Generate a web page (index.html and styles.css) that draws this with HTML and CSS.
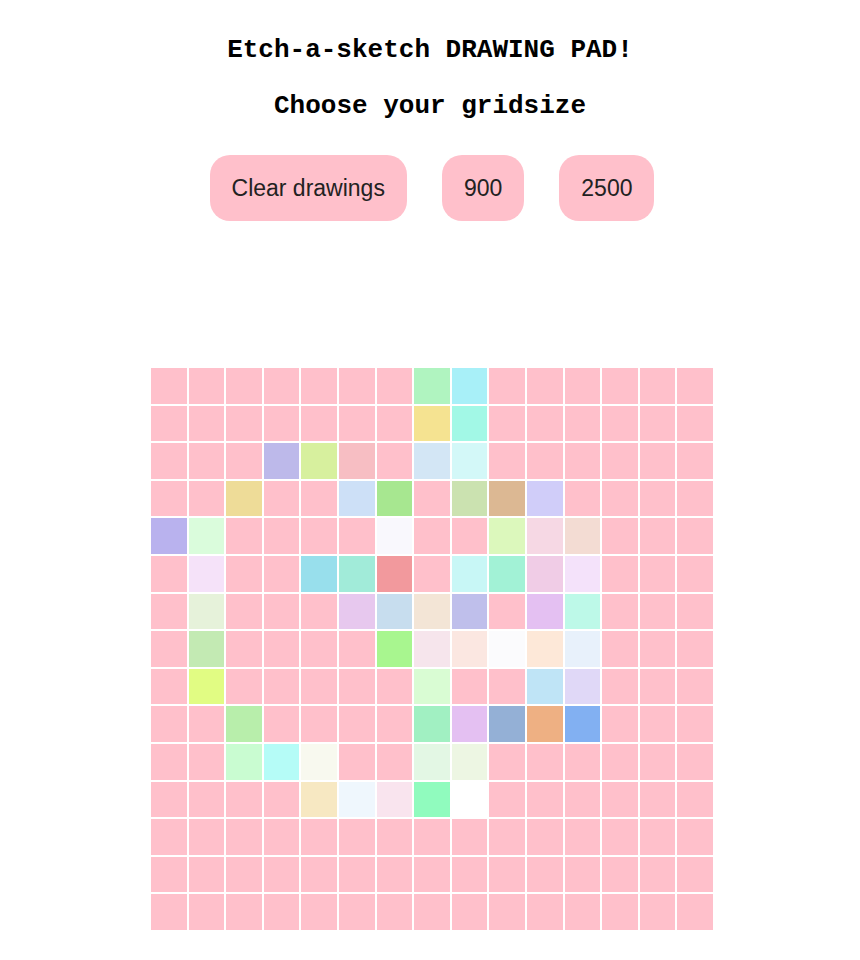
FILE: index.html
```html
<!DOCTYPE html>
<html lang="en">
<head>
<meta charset="utf-8">
<title>Etch-a-sketch</title>
<link rel="stylesheet" href="styles.css">
</head>
<body>
<main class="page">
  <h1 class="title">Etch-a-sketch DRAWING PAD!</h1>
  <h2 class="subtitle">Choose your gridsize</h2>
  <div class="controls">
    <button class="btn">Clear drawings</button>
    <button class="btn">900</button>
    <button class="btn">2500</button>
  </div>
  <div class="grid">
    <!-- row 0 -->
    <div class="cell"></div><div class="cell"></div><div class="cell"></div><div class="cell"></div><div class="cell"></div><div class="cell"></div><div class="cell"></div><div class="cell" style="background:#b0f4c0"></div><div class="cell" style="background:#a8f0f8"></div><div class="cell"></div><div class="cell"></div><div class="cell"></div><div class="cell"></div><div class="cell"></div><div class="cell"></div>
    <!-- row 1 -->
    <div class="cell"></div><div class="cell"></div><div class="cell"></div><div class="cell"></div><div class="cell"></div><div class="cell"></div><div class="cell"></div><div class="cell" style="background:#f5e391"></div><div class="cell" style="background:#a2f8e6"></div><div class="cell"></div><div class="cell"></div><div class="cell"></div><div class="cell"></div><div class="cell"></div><div class="cell"></div>
    <!-- row 2 -->
    <div class="cell"></div><div class="cell"></div><div class="cell"></div><div class="cell" style="background:#bdb9ea"></div><div class="cell" style="background:#d7f09e"></div><div class="cell" style="background:#f7bec3"></div><div class="cell"></div><div class="cell" style="background:#d3e6f5"></div><div class="cell" style="background:#d3f8f8"></div><div class="cell"></div><div class="cell"></div><div class="cell"></div><div class="cell"></div><div class="cell"></div><div class="cell"></div>
    <!-- row 3 -->
    <div class="cell"></div><div class="cell"></div><div class="cell" style="background:#eedc98"></div><div class="cell"></div><div class="cell"></div><div class="cell" style="background:#cde0f7"></div><div class="cell" style="background:#a7e790"></div><div class="cell"></div><div class="cell" style="background:#cbe2b0"></div><div class="cell" style="background:#dcb893"></div><div class="cell" style="background:#d0cdf9"></div><div class="cell"></div><div class="cell"></div><div class="cell"></div><div class="cell"></div>
    <!-- row 4 -->
    <div class="cell" style="background:#b9b2ee"></div><div class="cell" style="background:#dafcdc"></div><div class="cell"></div><div class="cell"></div><div class="cell"></div><div class="cell"></div><div class="cell" style="background:#f9f8fd"></div><div class="cell"></div><div class="cell"></div><div class="cell" style="background:#dcf8bc"></div><div class="cell" style="background:#f6d8e4"></div><div class="cell" style="background:#f3dcd3"></div><div class="cell"></div><div class="cell"></div><div class="cell"></div>
    <!-- row 5 -->
    <div class="cell"></div><div class="cell" style="background:#f5e2f9"></div><div class="cell"></div><div class="cell"></div><div class="cell" style="background:#98dfec"></div><div class="cell" style="background:#a1ebd9"></div><div class="cell" style="background:#f2999d"></div><div class="cell"></div><div class="cell" style="background:#c8f7f6"></div><div class="cell" style="background:#a2f2d6"></div><div class="cell" style="background:#f0cce6"></div><div class="cell" style="background:#f4e2fa"></div><div class="cell"></div><div class="cell"></div><div class="cell"></div>
    <!-- row 6 -->
    <div class="cell"></div><div class="cell" style="background:#e6f2da"></div><div class="cell"></div><div class="cell"></div><div class="cell"></div><div class="cell" style="background:#e7c8ee"></div><div class="cell" style="background:#c7ddee"></div><div class="cell" style="background:#f3e5d6"></div><div class="cell" style="background:#bfbfeb"></div><div class="cell"></div><div class="cell" style="background:#e4c0f2"></div><div class="cell" style="background:#bdf9e8"></div><div class="cell"></div><div class="cell"></div><div class="cell"></div>
    <!-- row 7 -->
    <div class="cell"></div><div class="cell" style="background:#c3eab3"></div><div class="cell"></div><div class="cell"></div><div class="cell"></div><div class="cell"></div><div class="cell" style="background:#a8f68f"></div><div class="cell" style="background:#f6e5ec"></div><div class="cell" style="background:#fbe7e1"></div><div class="cell" style="background:#fbfbfd"></div><div class="cell" style="background:#fde8d8"></div><div class="cell" style="background:#e8f1fb"></div><div class="cell"></div><div class="cell"></div><div class="cell"></div>
    <!-- row 8 -->
    <div class="cell"></div><div class="cell" style="background:#e1fc83"></div><div class="cell"></div><div class="cell"></div><div class="cell"></div><div class="cell"></div><div class="cell"></div><div class="cell" style="background:#d9fcd3"></div><div class="cell"></div><div class="cell"></div><div class="cell" style="background:#bfe4f6"></div><div class="cell" style="background:#e0d8f7"></div><div class="cell"></div><div class="cell"></div><div class="cell"></div>
    <!-- row 9 -->
    <div class="cell"></div><div class="cell"></div><div class="cell" style="background:#b8eeab"></div><div class="cell"></div><div class="cell"></div><div class="cell"></div><div class="cell"></div><div class="cell" style="background:#a1f0c2"></div><div class="cell" style="background:#e4c0f2"></div><div class="cell" style="background:#94b0d6"></div><div class="cell" style="background:#eeb083"></div><div class="cell" style="background:#82b0f2"></div><div class="cell"></div><div class="cell"></div><div class="cell"></div>
    <!-- row 10 -->
    <div class="cell"></div><div class="cell"></div><div class="cell" style="background:#c9fcd1"></div><div class="cell" style="background:#b5fcf7"></div><div class="cell" style="background:#f8f9ef"></div><div class="cell"></div><div class="cell"></div><div class="cell" style="background:#e3f7e4"></div><div class="cell" style="background:#edf6e3"></div><div class="cell"></div><div class="cell"></div><div class="cell"></div><div class="cell"></div><div class="cell"></div><div class="cell"></div>
    <!-- row 11 -->
    <div class="cell"></div><div class="cell"></div><div class="cell"></div><div class="cell"></div><div class="cell" style="background:#f7e8c2"></div><div class="cell" style="background:#eff7fd"></div><div class="cell" style="background:#f9e4ee"></div><div class="cell" style="background:#90fbbe"></div><div class="cell" style="background:#ffffff"></div><div class="cell"></div><div class="cell"></div><div class="cell"></div><div class="cell"></div><div class="cell"></div><div class="cell"></div>
    <!-- row 12 -->
    <div class="cell"></div><div class="cell"></div><div class="cell"></div><div class="cell"></div><div class="cell"></div><div class="cell"></div><div class="cell"></div><div class="cell"></div><div class="cell"></div><div class="cell"></div><div class="cell"></div><div class="cell"></div><div class="cell"></div><div class="cell"></div><div class="cell"></div>
    <!-- row 13 -->
    <div class="cell"></div><div class="cell"></div><div class="cell"></div><div class="cell"></div><div class="cell"></div><div class="cell"></div><div class="cell"></div><div class="cell"></div><div class="cell"></div><div class="cell"></div><div class="cell"></div><div class="cell"></div><div class="cell"></div><div class="cell"></div><div class="cell"></div>
    <!-- row 14 -->
    <div class="cell"></div><div class="cell"></div><div class="cell"></div><div class="cell"></div><div class="cell"></div><div class="cell"></div><div class="cell"></div><div class="cell"></div><div class="cell"></div><div class="cell"></div><div class="cell"></div><div class="cell"></div><div class="cell"></div><div class="cell"></div><div class="cell"></div>
  </div>
</main>
</body>
</html>
```
FILE: styles.css
```css
html, body {
  margin: 0;
  padding: 0;
  background: #ffffff;
}

.page {
  display: flex;
  flex-direction: column;
  align-items: center;
  padding-top: 35px;
}

.title,
.subtitle {
  margin: 0;
  font-family: "Liberation Mono", "Courier New", monospace;
  font-size: 26px;
  line-height: 30px;
  font-weight: bold;
  color: #000;
}

.subtitle {
  margin-top: 26px;
}

.controls {
  display: flex;
  gap: 35px;
  margin-top: 34px;
  margin-left: 4px;
}

.btn {
  font-family: "Liberation Sans", Arial, sans-serif;
  font-size: 23px;
  line-height: 26px;
  color: #222;
  background: #ffc0cb;
  border: none;
  border-radius: 20px;
  padding: 20px 22px;
  cursor: pointer;
}

.grid {
  display: grid;
  grid-template-columns: repeat(15, 1fr);
  width: 564px;
  margin-top: 146px;
  margin-left: 4px;
}

.cell {
  box-sizing: border-box;
  height: 37.6px;
  border: 1px solid #ffffff;
  background: #ffc0cb;
}
```
